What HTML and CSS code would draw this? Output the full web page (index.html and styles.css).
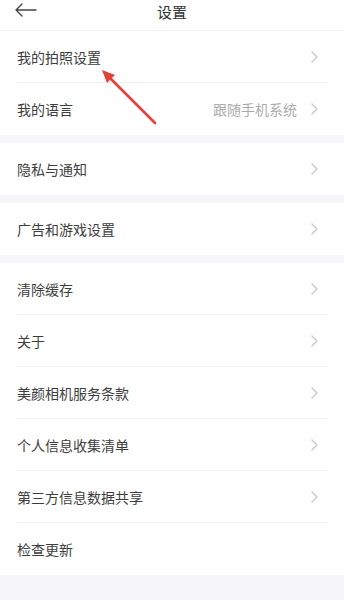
FILE: index.html
```html
<!DOCTYPE html>
<html lang="zh">
<head>
<meta charset="utf-8">
<link rel="stylesheet" href="styles.css">
</head>
<body>
<div class="page">
  <header class="topbar">
    <svg class="back" width="22" height="14" viewBox="0 0 22 14"><path d="M7 1 L1 7 L7 13 M1 7 H21" fill="none" stroke="#444" stroke-width="1.4" stroke-linecap="round" stroke-linejoin="round"/></svg>
    <div class="title">设置</div>
  </header>
  <section class="group">
    <div class="row"><span class="label">我的拍照设置</span><svg class="chev" width="7" height="12" viewBox="0 0 7 12"><path d="M1 1 L6 6 L1 11" fill="none" stroke="#c8c8c8" stroke-width="1.3" stroke-linecap="round" stroke-linejoin="round"/></svg></div>
    <div class="row"><span class="label">我的语言</span><span class="value">跟随手机系统</span><svg class="chev" width="7" height="12" viewBox="0 0 7 12"><path d="M1 1 L6 6 L1 11" fill="none" stroke="#c8c8c8" stroke-width="1.3" stroke-linecap="round" stroke-linejoin="round"/></svg></div>
  </section>
  <section class="group">
    <div class="row"><span class="label">隐私与通知</span><svg class="chev" width="7" height="12" viewBox="0 0 7 12"><path d="M1 1 L6 6 L1 11" fill="none" stroke="#c8c8c8" stroke-width="1.3" stroke-linecap="round" stroke-linejoin="round"/></svg></div>
  </section>
  <section class="group">
    <div class="row"><span class="label">广告和游戏设置</span><svg class="chev" width="7" height="12" viewBox="0 0 7 12"><path d="M1 1 L6 6 L1 11" fill="none" stroke="#c8c8c8" stroke-width="1.3" stroke-linecap="round" stroke-linejoin="round"/></svg></div>
  </section>
  <section class="group">
    <div class="row"><span class="label">清除缓存</span><svg class="chev" width="7" height="12" viewBox="0 0 7 12"><path d="M1 1 L6 6 L1 11" fill="none" stroke="#c8c8c8" stroke-width="1.3" stroke-linecap="round" stroke-linejoin="round"/></svg></div>
    <div class="row"><span class="label">关于</span><svg class="chev" width="7" height="12" viewBox="0 0 7 12"><path d="M1 1 L6 6 L1 11" fill="none" stroke="#c8c8c8" stroke-width="1.3" stroke-linecap="round" stroke-linejoin="round"/></svg></div>
    <div class="row"><span class="label">美颜相机服务条款</span><svg class="chev" width="7" height="12" viewBox="0 0 7 12"><path d="M1 1 L6 6 L1 11" fill="none" stroke="#c8c8c8" stroke-width="1.3" stroke-linecap="round" stroke-linejoin="round"/></svg></div>
    <div class="row"><span class="label">个人信息收集清单</span><svg class="chev" width="7" height="12" viewBox="0 0 7 12"><path d="M1 1 L6 6 L1 11" fill="none" stroke="#c8c8c8" stroke-width="1.3" stroke-linecap="round" stroke-linejoin="round"/></svg></div>
    <div class="row"><span class="label">第三方信息数据共享</span><svg class="chev" width="7" height="12" viewBox="0 0 7 12"><path d="M1 1 L6 6 L1 11" fill="none" stroke="#c8c8c8" stroke-width="1.3" stroke-linecap="round" stroke-linejoin="round"/></svg></div>
    <div class="row"><span class="label">检查更新</span></div>
  </section>
  <svg class="annot" width="344" height="140" viewBox="0 0 344 140">
    <line x1="155" y1="123" x2="109" y2="77" stroke="#e5413b" stroke-width="2.6" stroke-linecap="round"/>
    <polygon points="102,70 115,75 107,83" fill="#e5413b"/>
  </svg>
</div>
</body>
</html>
```
FILE: styles.css
```css
html, body {
  margin: 0;
  padding: 0;
  background: #f6f6f8;
}
body {
  font-family: "Noto Sans CJK SC", "Noto Sans", sans-serif;
  color: #3a3a3a;
}
.page {
  position: relative;
  width: 344px;
  min-height: 600px;
  display: flex;
  flex-direction: column;
  gap: 8px;
}
.topbar {
  height: 30px;
  background: #fff;
  border-bottom: 1px solid #f0f0f0;
  position: relative;
  display: flex;
  align-items: center;
  justify-content: center;
  margin-bottom: -8px;
}
.back {
  position: absolute;
  left: 15px;
  top: 3px;
}
.title {
  font-size: 15px;
  line-height: 24px;
  margin-top: -7px;
  color: #333;
}
.group {
  background: #fff;
  padding: 0 17px;
}
.row {
  height: 52px;
  display: flex;
  align-items: center;
  border-bottom: 1px solid #efefef;
  box-sizing: border-box;
}
.row:last-child {
  border-bottom: none;
}
.label {
  flex: 1;
  font-size: 14px;
  color: #3d3d3d;
}
.value {
  font-size: 14px;
  color: #ababab;
  margin-right: 14px;
}
.chev {
  display: block;
  margin-right: 9px;
}
.annot {
  position: absolute;
  left: 0;
  top: 0;
  pointer-events: none;
}
```
